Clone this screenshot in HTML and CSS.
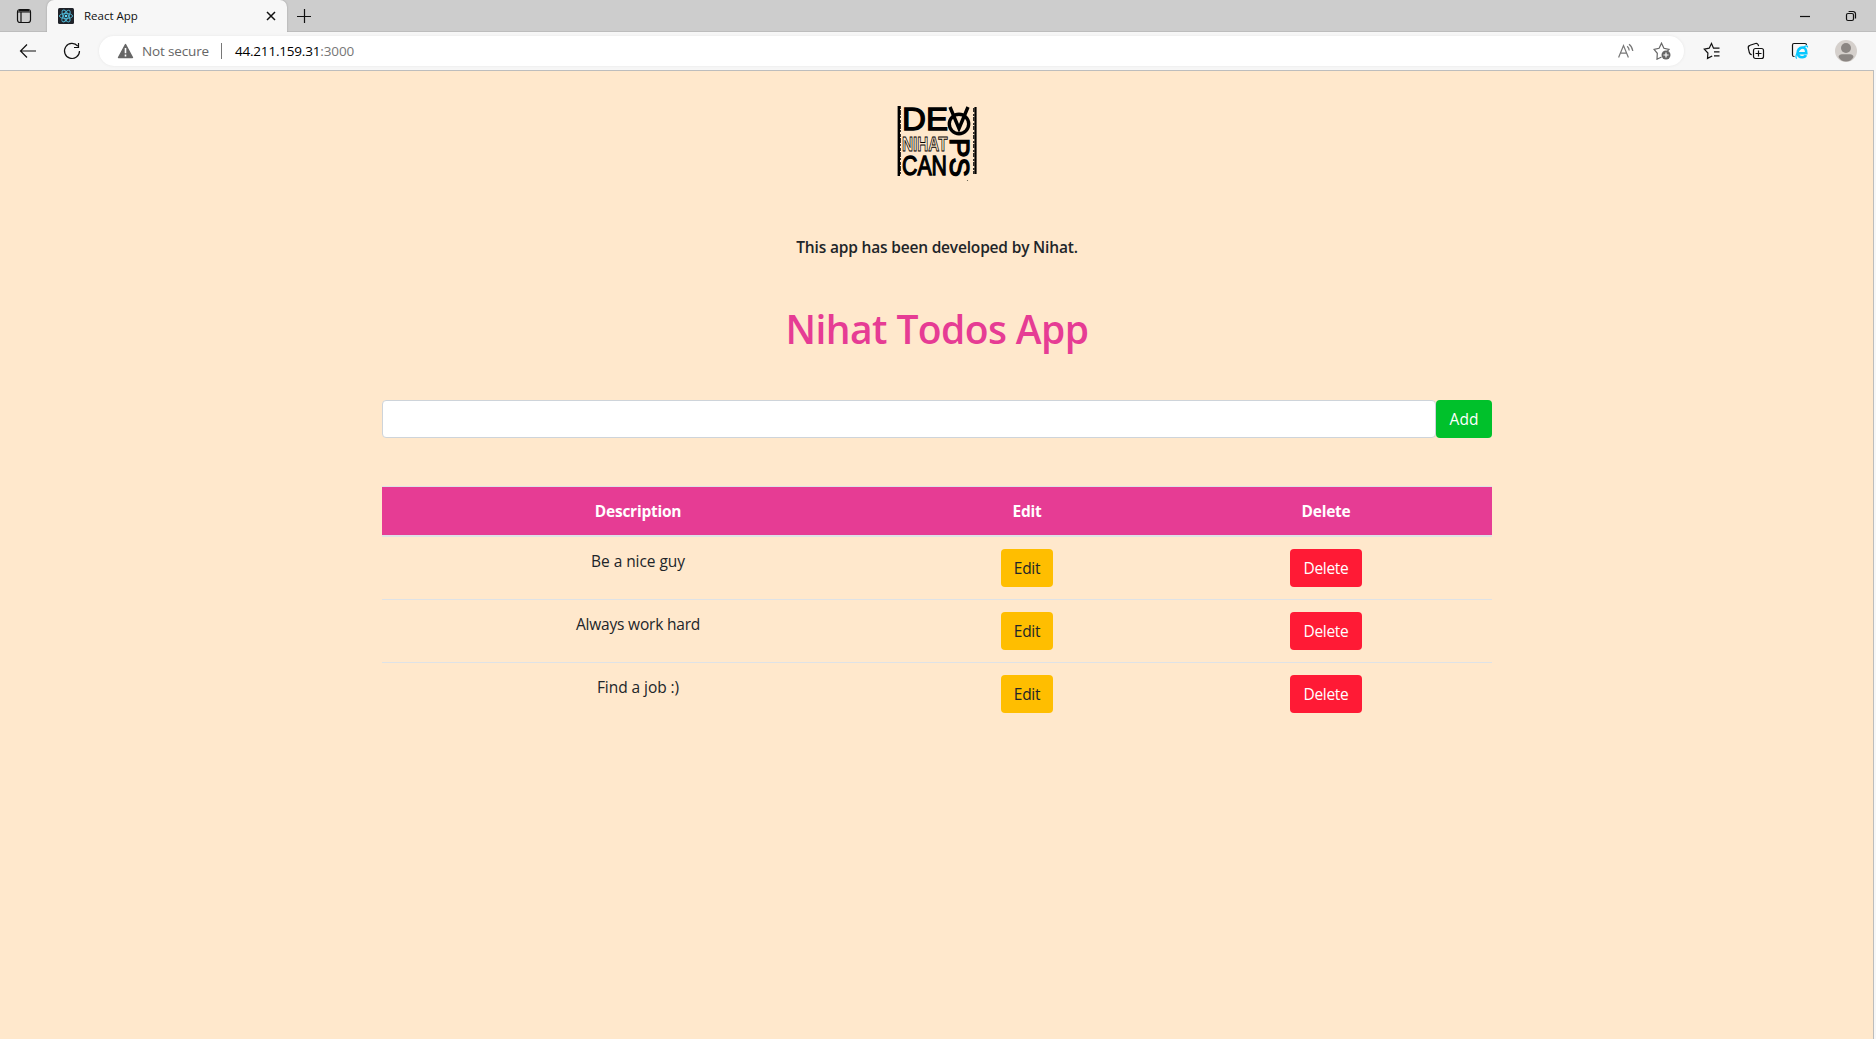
FILE: index.html
```html
<!DOCTYPE html>
<html lang="en">
<head>
<meta charset="utf-8">
<title>React App</title>
<link rel="stylesheet" href="styles.css">
</head>
<body>
<header class="tabstrip">
  <svg class="workspace-icon" width="16" height="16" viewBox="0 0 16 16"><rect x="1.5" y="1.5" width="13" height="13" rx="2.5"/><path d="M2 4h12M5 4v10" stroke-width="1.2"/><path d="M3 2.6h10" stroke-width="1.6"/></svg>
  <div class="tab">
    <svg class="favicon" width="16" height="16" viewBox="0 0 16 16"><rect width="16" height="16" rx="1.5" fill="#20232a"/><g fill="none" stroke="#4fb8d6" stroke-width=".9"><ellipse cx="8" cy="8" rx="6.6" ry="2.6"/><ellipse cx="8" cy="8" rx="6.6" ry="2.6" transform="rotate(60 8 8)"/><ellipse cx="8" cy="8" rx="6.6" ry="2.6" transform="rotate(120 8 8)"/></g><circle cx="8" cy="8" r="1.3" fill="#61dafb"/></svg>
    <span class="tab-title">React App</span>
    <svg class="tab-close" width="10" height="10" viewBox="0 0 10 10"><path d="M1 1l8 8M9 1l-8 8"/></svg>
  </div>
  <svg class="new-tab" width="16" height="16" viewBox="0 0 16 16"><path d="M8.5 1v14M1 8.5h14"/></svg>
  <div class="window-controls">
    <svg width="12" height="12" viewBox="0 0 12 12"><path d="M1 6.5h10"/></svg>
    <svg width="12" height="12" viewBox="0 0 12 12"><rect x="1.5" y="3.5" width="7" height="7" rx="1.5"/><path d="M3.6 1.5h4.4a2.5 2.5 0 0 1 2.5 2.5v4.5"/></svg>
  </div>
</header>
<nav class="toolbar">
  <svg class="back" width="18" height="16" viewBox="0 0 18 16"><path d="M17 8H1.5M8 1.5L1.5 8L8 14.5"/></svg>
  <svg class="reload" width="18" height="18" viewBox="0 0 18 18"><path d="M16.5 9A7.5 7.5 0 1 1 14.8 4.2M15.5 1v4.5H11"/></svg>
  <div class="address">
    <svg class="warning" width="17" height="16" viewBox="0 0 17 16"><path d="M8.5 1.5L15.500 14.500H1.500z" fill="#666" stroke="#666" stroke-width="1.4" stroke-linejoin="round"/><path d="M8.5 5v5.2M8.5 11.6v1.8" stroke="#fff" stroke-width="1.6"/></svg>
    <span class="not-secure">Not secure</span>
    <span class="divider"></span>
    <span class="url">44.211.159.31<span class="port">:3000</span></span>
    <svg class="read-aloud" width="17" height="16" viewBox="0 0 17 16"><path d="M.6 14.5L5.5 2.5L10.4 14.5M2.4 10.2h6.3M9.2 3.2Q11 4.8 11.2 7.5M11 1.2Q14.2 3.5 14.8 8"/></svg>
    <svg class="favorite" width="18" height="18" viewBox="0 0 18 18"><path d="M8.5 15L4 17.2 4.3 11.3 1 7.3l5.1-1L8.5 1.2l2.4 5.1 5.1 1-2 2.3"/><circle cx="13" cy="13" r="4.5" fill="#666" stroke="none"/><path d="M13 10.4v5.2M10.4 13h5.2" stroke="#fff" stroke-width="1.2"/></svg>
  </div>
  <div class="tools">
    <svg width="18" height="18" viewBox="0 0 18 18"><path d="M9.2 14L4.5 16.4 4.9 11 1.3 7.2l4.9-1L8.5 1.5l2 4.7h6M11 9.8h5.5M11 13.8h5.5"/></svg>
    <svg width="18" height="18" viewBox="0 0 18 18"><rect x="6.5" y="6.5" width="10" height="10" rx="2"/><path d="M11.5 8.5v6M8.5 11.5h6M4.8 12.7C3.2 12.8 2.8 12 2.4 10.8L1.3 6.2C1 4.8 1.6 3.7 3 3.3L8.5 1.5C10 1.1 11.2 2 11.6 4.2"/></svg>
    <svg width="18" height="18" viewBox="0 0 18 18"><path d="M3.5 14.5h-.5q-1.5 0-1.5-1.5V3Q1.500 1.500 3 1.500H14Q15.500 1.500 15.500 3"/><path d="M6.8 11.200H15.300C15.300 6.200 13.500 5.500 11.200 5.500C8.300 5.500 6.700 7.800 6.700 10.500C6.700 13.500 8.500 15.200 11.200 15.200C13 15.200 14.400 14.700 14.900 13.200" stroke="#08c8ff" stroke-width="2.6"/><path d="M6 16.5C3.500 15.500 6 9 10 6.500C13 4.500 17 2.500 16.500 5.500" stroke="#08c8ff"/></svg>
    <svg class="avatar" width="22" height="22" viewBox="0 0 22 22"><circle cx="11" cy="11" r="11" fill="#d5d0cc" stroke="none"/><circle cx="11" cy="8" r="5" fill="#8b8683" stroke="none"/><path d="M3.500 17Q4 14.300 7 14.300H15Q18 14.300 18.500 17Q16 21.500 11 21.500T3.500 17" fill="#8b8683" stroke="none"/></svg>
  </div>
</nav>
<main class="page">
  <div class="container">
    <svg class="logo" width="110" height="100" viewBox="0 0 110 100">
      <g fill="none" stroke="#000"><path d="M18.800 16v70" stroke-width="2.400"/><path d="M20.300 16v70" stroke-width="1" stroke-dasharray="3 1 5 1 2 2"/><path d="M95.500 17v67" stroke-width="2.200"/><path d="M93.800 18v66" stroke-width="1.200" stroke-dasharray="4 2 2 1"/><circle cx="79" cy="34" r="9.700" stroke-width="3.400"/><path d="M70 17l9 21.500L88 17" stroke-width="3.400"/></g>
      <g class="logo-text">
        <text class="heavy" x="22" y="40" font-size="31.500" textLength="46" lengthAdjust="spacingAndGlyphs">DE</text>
        <text class="outlined" x="22" y="60.500" font-size="21" textLength="45.500" lengthAdjust="spacingAndGlyphs">NIHAT</text>
        <text class="heavy" x="22" y="85" font-size="28" textLength="45" lengthAdjust="spacingAndGlyphs">CAN</text>
        <text class="heavy" transform="translate(69.500 48) rotate(90)" font-size="28" textLength="39" lengthAdjust="spacingAndGlyphs">PS</text>
      </g>
      <circle cx="87.500" cy="90.500" r=".6" fill="#554"/>
    </svg>
    <p class="credit">This app has been developed by Nihat.</p>
    <h1>Nihat Todos App</h1>
    <form class="todo-form">
      <input class="todo-input" type="text">
      <button class="btn btn-add" type="button">Add</button>
    </form>
    <table class="todos">
      <thead>
        <tr><th class="col-description">Description</th><th class="col-edit">Edit</th><th class="col-delete">Delete</th></tr>
      </thead>
      <tbody>
        <tr><td>Be a nice guy</td><td><button class="btn btn-edit">Edit</button></td><td><button class="btn btn-delete">Delete</button></td></tr>
        <tr><td class="tight">Always work hard</td><td><button class="btn btn-edit">Edit</button></td><td><button class="btn btn-delete">Delete</button></td></tr>
        <tr><td>Find a job :)</td><td><button class="btn btn-edit">Edit</button></td><td><button class="btn btn-delete">Delete</button></td></tr>
      </tbody>
    </table>
  </div>
</main>
</body>
</html>
```
FILE: styles.css
```css
* { box-sizing: border-box; }

body {
  margin: 0;
  height: 1039px;
  display: flex;
  flex-direction: column;
  overflow: hidden;
  background: #f7f7f7;
  color: #212529;
  font: 15.5px/24px "Open Sans", "Noto Sans", sans-serif;
}

svg { display: block; flex: none; }

/* Browser chrome */
.tabstrip {
  height: 32px;
  display: flex;
  align-items: center;
  background: #cdcdcd;
  border-bottom: 1px solid #bdbdbd;
}
.tabstrip svg:not(.favicon),
.toolbar svg { fill: none; stroke: #111; stroke-width: 1.2; }
.workspace-icon { margin-left: 16px; }
.tab {
  width: 240px;
  height: 32px;
  margin: 0 0 -1px 15px;
  padding: 0 11px;
  display: flex;
  align-items: center;
  background: #f7f7f7;
  border-radius: 7px 7px 0 0;
  box-shadow: 0 0 2px #999;
  clip-path: inset(0 -3px 0 -3px);
}
.tab-title {
  margin-left: 10px;
  color: #111;
  font-size: 11.5px;
}
.tab-close { margin-left: auto; stroke-width: 1.5 !important; }
.new-tab { margin-left: 9px; }
.window-controls {
  display: flex;
  gap: 34px;
  margin-left: auto;
  padding-right: 19px;
}

.toolbar {
  height: 38px;
  display: flex;
  align-items: center;
  flex: none;
}
.back { margin-left: 19px; }
.reload { margin-left: 26px; }
.address {
  width: 1585px;
  height: 30px;
  margin-left: 18px;
  padding: 0 13px 0 18px;
  display: flex;
  align-items: center;
  background: #fff;
  border-radius: 15px;
  box-shadow: 0 0 3px #e6e6e6;
  font-size: 13.5px;
}
.not-secure { margin-left: 8px; color: #666; letter-spacing: -.15px; }
.divider { width: 1px; height: 16px; margin: 0 13px 0 12px; background: #777; }
.url { color: #000; letter-spacing: -.2px; }
.port { color: #777; letter-spacing: -.08px; }
.toolbar .read-aloud { margin-left: auto; stroke: #777; }
.toolbar .favorite { margin-left: 18px; stroke: #666; }
.tools { display: flex; align-items: center; gap: 26px; margin-left: 19px; }

/* Application */
.page {
  flex: 1;
  width: 1874px;
  border: solid #bdbdbd;
  border-width: 1px 1px 0 0;
  background: #ffe8cc;
}
.container {
  width: 1110px;
  margin: 0 0 0 382px;
  text-align: center;
}
.logo { margin: 19px 0 0 498px; }
.logo-text { font-family: "Liberation Sans", Arial, sans-serif; }
.heavy { fill: #000; stroke: #000; stroke-width: 1.3; }
.outlined { fill: none; stroke: #000; stroke-width: .9; font-weight: 700; }
.credit {
  margin: 45px 0 0;
  font-weight: 600;
  letter-spacing: -.18px;
}
h1 {
  margin: 46px 0 0;
  color: #e63c94;
  font-size: 39px;
  font-weight: 600;
  line-height: 48px;
  letter-spacing: -.6px;
}
.todo-form { display: flex; margin: 47px 0 0; }
.todo-input {
  flex: 1;
  height: 38px;
  padding: 6px 12px;
  background: #fff;
  border: 1px solid #ced4da;
  border-radius: 4px;
}
.btn {
  height: 38px;
  padding: 0;
  border: 0;
  border-radius: 4px;
  font: inherit;
}
.btn-add { width: 56px; background: #00c12b; color: #fff; }
.btn-edit { width: 52px; background: #ffbe00; color: #212529; letter-spacing: -.3px; }
.btn-delete { width: 72px; background: #ff1a35; color: #fff; letter-spacing: -.3px; }

.todos {
  width: 100%;
  margin-top: 48px;
  table-layout: fixed;
  border-spacing: 0;
}
.todos th {
  height: 51px;
  padding: 12px;
  background: #e63c94;
  background-clip: padding-box;
  border-top: 1px solid #dee2e6;
  border-bottom: 2px solid #dee2e6;
  color: #fff;
  letter-spacing: -.25px;
}
.col-description { width: 512px; }
.col-edit { width: 266px; }
.todos td {
  height: 62px;
  padding: 12px;
  vertical-align: top;
  letter-spacing: -.06px;
}
.todos tr + tr td { height: 63px; border-top: 1px solid #dee2e6; }
.todos .tight { letter-spacing: -.2px; }
```
